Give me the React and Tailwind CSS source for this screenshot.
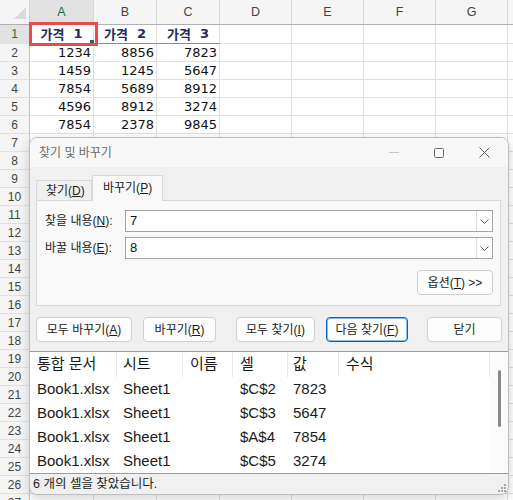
import React from "react";

const FONT = '"Liberation Sans", "Noto Sans CJK KR", sans-serif';
const CELLFONT = '"DejaVu Sans", "Noto Sans CJK KR", sans-serif';

const COLS = [
  { k: "A", w: "w-[64px]" },
  { k: "B", w: "w-[63px]" },
  { k: "C", w: "w-[63px]" },
  { k: "D", w: "w-[72px]" },
  { k: "E", w: "w-[72px]" },
  { k: "F", w: "w-[72px]" },
  { k: "G", w: "w-[72px]" },
];

const DATA = {
  1: ["1", "2", "3"],
  2: ["1234", "8856", "7823"],
  3: ["1459", "1245", "5647"],
  4: ["7854", "5689", "8912"],
  5: ["4596", "8912", "3274"],
  6: ["7854", "2378", "9845"],
};

const RESULTS = [
  ["Book1.xlsx", "Sheet1", "", "$C$2", "7823"],
  ["Book1.xlsx", "Sheet1", "", "$C$3", "5647"],
  ["Book1.xlsx", "Sheet1", "", "$A$4", "7854"],
  ["Book1.xlsx", "Sheet1", "", "$C$5", "3274"],
];

const LISTCOLS = [
  { t: "통합 문서", w: "w-[87px] pl-[7px]" },
  { t: "시트", w: "w-[66px] pl-[6px]" },
  { t: "이름", w: "w-[50px] pl-[7px]" },
  { t: "셀", w: "w-[55px] pl-[7px]" },
  { t: "값", w: "w-[51px] pl-[5px]" },
  { t: "수식", w: "w-[151px] pl-[7px]" },
];

function Sheet() {
  const rows = [];
  for (let r = 1; r <= 27; r++) rows.push(r);
  return (
    <div className="flex flex-col">
      <div className="flex h-[25px] border-b border-[#b1b1b1] bg-[#f5f5f5]">
        <div className="w-[30px] shrink-0 border-r border-[#d4d4d4] flex items-end justify-end pr-[3px] pb-[5px]">
          <svg width="12" height="12" viewBox="0 0 12 12">
            <polygon points="12,0 12,12 0,12" fill="#d9d9d9" />
          </svg>
        </div>
        {COLS.map((c) => (
          <div
            key={c.k}
            className={
              c.w +
              " shrink-0 border-r border-[#d8d8d8] flex items-center justify-center text-[12.5px] " +
              (c.k === "A" ? "bg-[#e2e2e2] text-[#1d6b44]" : "text-[#444444]")
            }
          >
            {c.k}
          </div>
        ))}
        <div className="flex-1" />
      </div>
      {rows.map((r) => (
        <div key={r} className={"flex " + (r === 1 ? "h-[19px]" : "h-[18px]")}>
          <div
            className={
              "w-[30px] shrink-0 border-r border-b border-r-[#c6c6c6] border-b-[#e0e0e0] flex items-center justify-center text-[12px] " +
              (r === 1 ? "bg-[#e2e2e2] text-[#1d6b44]" : "bg-[#f5f5f5] text-[#444444]")
            }
          >
            {r}
          </div>
          {COLS.map((c, i) => {
            const v = DATA[r] && i < 3 ? DATA[r][i] : "";
            const head = r === 1 && i < 3;
            if (head) {
              return (
                <div
                  key={c.k}
                  className={
                    c.w +
                    " shrink-0 border-r border-b border-r-[#e0e0e0] border-b-[#5b9bd5] flex items-center justify-center font-bold text-[13px] text-[#1f2b5c]"
                  }
                  style={{ fontFamily: '"Noto Sans CJK KR", "DejaVu Sans", sans-serif' }}
                >
                  <span>가격</span>
                  <span className="ml-[9px]" style={{ fontFamily: CELLFONT }}>
                    {v}
                  </span>
                </div>
              );
            }
            return (
              <div
                key={c.k}
                className={
                  c.w +
                  " shrink-0 border-r border-b border-r-[#e0e0e0] border-b-[#e0e0e0] flex items-center justify-end pr-[2px] text-[13px] text-[#111111]"
                }
                style={{ fontFamily: CELLFONT }}
              >
                {v}
              </div>
            );
          })}
          <div className="flex-1 border-b border-[#e0e0e0]" />
        </div>
      ))}
    </div>
  );
}

function Chevron() {
  return (
    <svg width="9" height="5" viewBox="0 0 9 5">
      <polyline points="0.5,0.5 4.5,4.5 8.5,0.5" fill="none" stroke="#5a5a5a" strokeWidth="1" />
    </svg>
  );
}

function Combo({ value }) {
  return (
    <div className="flex-1 h-[22px] flex border border-[#a3a3a3] bg-white">
      <div className="flex-1 flex items-center pl-[4px] text-[13px] text-[#111111]">{value}</div>
      <div className="w-[16px] border-l border-[#dadada] flex items-center justify-center">
        <Chevron />
      </div>
    </div>
  );
}

function Btn({ children, w, ml, primary }) {
  return (
    <div
      className={
        w +
        " " +
        ml +
        " h-[25px] rounded-[4px] flex items-center justify-center text-[12px] text-[#1b1b1b] bg-[#fdfdfd] " +
        (primary
          ? "border border-[#0067c0] shadow-[inset_0_0_0_1px_rgba(0,103,192,0.45)]"
          : "border border-[#d0d0d0]")
      }
    >
      {children}
    </div>
  );
}

function Dialog() {
  return (
    <div className="absolute left-[29px] top-[137px] w-[480px] h-[358px] rounded-[8px] border border-[#bebebe] bg-[#f0f0f0] shadow-[0_3px_12px_rgba(0,0,0,0.18)] overflow-hidden flex flex-col">
      <div className="h-[29px] shrink-0 bg-[#f8f8f8] flex items-center pl-[9px] pr-[18px]">
        <span className="text-[12px] text-[#6a6a6a]">찾기 및 바꾸기</span>
        <div className="ml-auto flex items-center gap-[35px]">
          <div className="w-[10px] h-px bg-[#c9c9c9]" />
          <div className="w-[10px] h-[10px] border border-[#6d6d6d] rounded-[1.5px]" />
          <svg width="11" height="11" viewBox="0 0 11 11">
            <path d="M0.5 0.5 L10.5 10.5 M10.5 0.5 L0.5 10.5" stroke="#5c5c5c" strokeWidth="1" />
          </svg>
        </div>
      </div>
      <div className="flex flex-col pt-[8px]">
        <div className="flex items-end ml-[6px] h-[25px]">
          <div className="w-[56px] h-[20px] border border-b-0 border-[#d9d9d9] bg-[#f0f0f0] flex items-center pl-[9px] text-[12px] text-[#1b1b1b]">
            찾기(<span className="underline">D</span>)
          </div>
          <div className="relative z-10 -mb-px w-[71px] h-[26px] border border-b-0 border-[#d9d9d9] bg-[#f9f9f9] flex items-center pl-[10px] pb-[2px] text-[12px] text-[#1b1b1b]">
            바꾸기(<span className="underline">P</span>)
          </div>
        </div>
        <div className="mx-[6px] w-[465px] h-[106px] border border-[#d9d9d9] bg-[#f9f9f9] flex flex-col pt-[9px] pl-[8px] pr-[7px]">
          <div className="flex items-center">
            <div className="w-[80px] text-[12px] text-[#1b1b1b]">
              찾을 내용(<span className="underline">N</span>):
            </div>
            <Combo value="7" />
          </div>
          <div className="flex items-center mt-[5px]">
            <div className="w-[80px] text-[12px] text-[#1b1b1b]">
              바꿀 내용(<span className="underline">E</span>):
            </div>
            <Combo value="8" />
          </div>
          <div className="self-end mt-[11px] w-[76px] h-[25px] rounded-[4px] border border-[#cfcfcf] bg-[#fdfdfd] flex items-center justify-center text-[12px] text-[#1b1b1b]">
            옵션(<span className="underline">T</span>)&nbsp;&gt;&gt;
          </div>
        </div>
        <div className="flex mt-[11px]">
          <Btn w="w-[96px]" ml="ml-[6px]">
            모두 바꾸기(<span className="underline">A</span>)
          </Btn>
          <Btn w="w-[73px]" ml="ml-[11px]">
            바꾸기(<span className="underline">R</span>)
          </Btn>
          <Btn w="w-[79px]" ml="ml-[20px]">
            모두 찾기(<span className="underline">I</span>)
          </Btn>
          <Btn w="w-[82px]" ml="ml-[11px]" primary>
            다음 찾기(<span className="underline">F</span>)
          </Btn>
          <Btn w="w-[75px]" ml="ml-[19px]">
            닫기
          </Btn>
        </div>
        <div className="mt-[9px] h-[123px] border-y border-[#9c9c9c] bg-white flex">
          <div className="flex flex-col w-[460px] text-[15px] text-[#1a1a1a]">
            <div className="flex h-[25px]">
              {LISTCOLS.map((c) => (
                <div key={c.t} className={c.w + " shrink-0 border-r border-[#e6e6e6] flex items-center"}>
                  {c.t}
                </div>
              ))}
            </div>
            {RESULTS.map((row, ri) => (
              <div key={ri} className="flex h-[24px]">
                {LISTCOLS.map((c, ci) => (
                  <div key={c.t} className={c.w + " shrink-0 flex items-center border-r border-transparent"}>
                    {row[ci] || ""}
                  </div>
                ))}
              </div>
            ))}
          </div>
          <div className="w-[18px] bg-[#fbfbfb] flex flex-col items-center pt-[18px]">
            <div className="w-[3px] h-[57px] rounded-full bg-[#8a8a8a]" />
          </div>
        </div>
        <div className="h-[20px] flex items-center justify-between pl-[3px] pr-[1px] text-[12.5px] text-[#1b1b1b]">
          <span>6 개의 셀을 찾았습니다.</span>
          <svg width="11" height="11" viewBox="0 0 11 11" className="self-end mb-[1px]">
            <circle cx="9" cy="3" r="0.9" fill="#8a8a8a" />
            <circle cx="9" cy="6" r="0.9" fill="#8a8a8a" />
            <circle cx="6" cy="6" r="0.9" fill="#8a8a8a" />
            <circle cx="9" cy="9" r="0.9" fill="#8a8a8a" />
            <circle cx="6" cy="9" r="0.9" fill="#8a8a8a" />
            <circle cx="3" cy="9" r="0.9" fill="#8a8a8a" />
          </svg>
        </div>
      </div>
    </div>
  );
}

export default function App() {
  return (
    <div className="relative w-[513px] h-[500px] overflow-hidden bg-white" style={{ fontFamily: FONT }}>
      <Sheet />
      <div className="absolute left-[29px] top-[22px] w-[69px] h-[24px] border-[3px] border-[#ea4a4a]" />
      <div className="absolute left-[90px] top-[40px] w-[4px] h-[3px] bg-[#1d6b44]" />
      <Dialog />
    </div>
  );
}
